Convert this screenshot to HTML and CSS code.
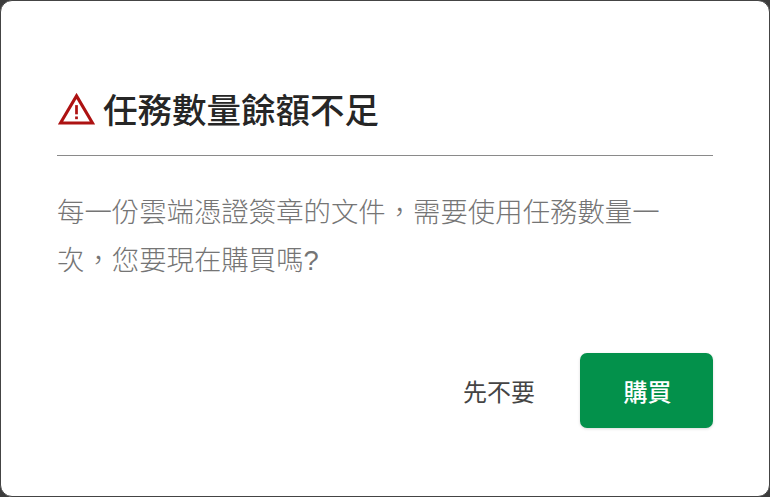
FILE: index.html
```html
<!DOCTYPE html>
<html lang="zh-Hant">
<head>
  <meta charset="UTF-8">
  <title>任務數量餘額不足</title>
  <link rel="stylesheet" href="styles.css">
</head>
<body>

  <div class="dialog">
    <div class="dialog-title">
      <svg class="warn-icon" viewBox="0 0 38 33" aria-hidden="true">
        <path d="M19 3 L35.5 31 H2.5 Z" fill="none" stroke="#ad1212" stroke-width="3.2"/>
        <rect x="17.6" y="12.5" width="2.8" height="9.5" fill="#ad1212"/>
        <rect x="17.6" y="24.2" width="2.8" height="2.8" fill="#ad1212"/>
      </svg>
      <h2>任務數量餘額不足</h2>
    </div>
    <p class="dialog-text">每一份雲端憑證簽章的文件，需要使用任務數量一次，您要現在購買嗎?</p>
    <div class="dialog-actions">
      <button class="btn-cancel">先不要</button>
      <button class="btn-buy">購買</button>
    </div>
  </div>

</body>
</html>
```

FILE: styles.css
```css
html, body {
  height: 100%;
}

body {
  margin: 0;
  background: #3c3c3c;
  font-family: "Liberation Sans", "Noto Sans CJK TC", sans-serif;
}

.dialog {
  box-sizing: border-box;
  height: 497px;
  padding: 83px 56px 68px;
  background: #fff;
  border: 1px solid #444;
  border-radius: 12px;
  display: flex;
  flex-direction: column;
}

.dialog-title {
  display: flex;
  align-items: center;
  gap: 8px;
  height: 48px;
  padding-bottom: 23px;
  border-bottom: 1px solid #8a8a8a;
}

.warn-icon {
  width: 37px;
  height: 32px;
  margin: 2px 0 0 1px;
}

.dialog-title h2 {
  margin: 0;
  font-size: 34.5px;
  font-weight: 500;
  color: #262626;
}

.dialog-text {
  margin: 33px 0 0;
  width: 620px;
  font-size: 27.4px;
  font-weight: 300;
  line-height: 48px;
  color: #757575;
}

.dialog-actions {
  margin-top: auto;
  display: flex;
  justify-content: flex-end;
  align-items: center;
  gap: 45px;
}

.btn-cancel {
  padding: 0;
  border: 0;
  background: none;
  font: inherit;
  font-size: 24px;
  color: #444;
}

.btn-buy {
  width: 133px;
  height: 75px;
  padding: 0 0 0 2px;
  border: 0;
  border-radius: 7px;
  background: #03914b;
  box-shadow: 0 1px 3px rgba(0,0,0,0.15);
  font: inherit;
  font-size: 24px;
  font-weight: 500;
  color: #fff;
}
```
